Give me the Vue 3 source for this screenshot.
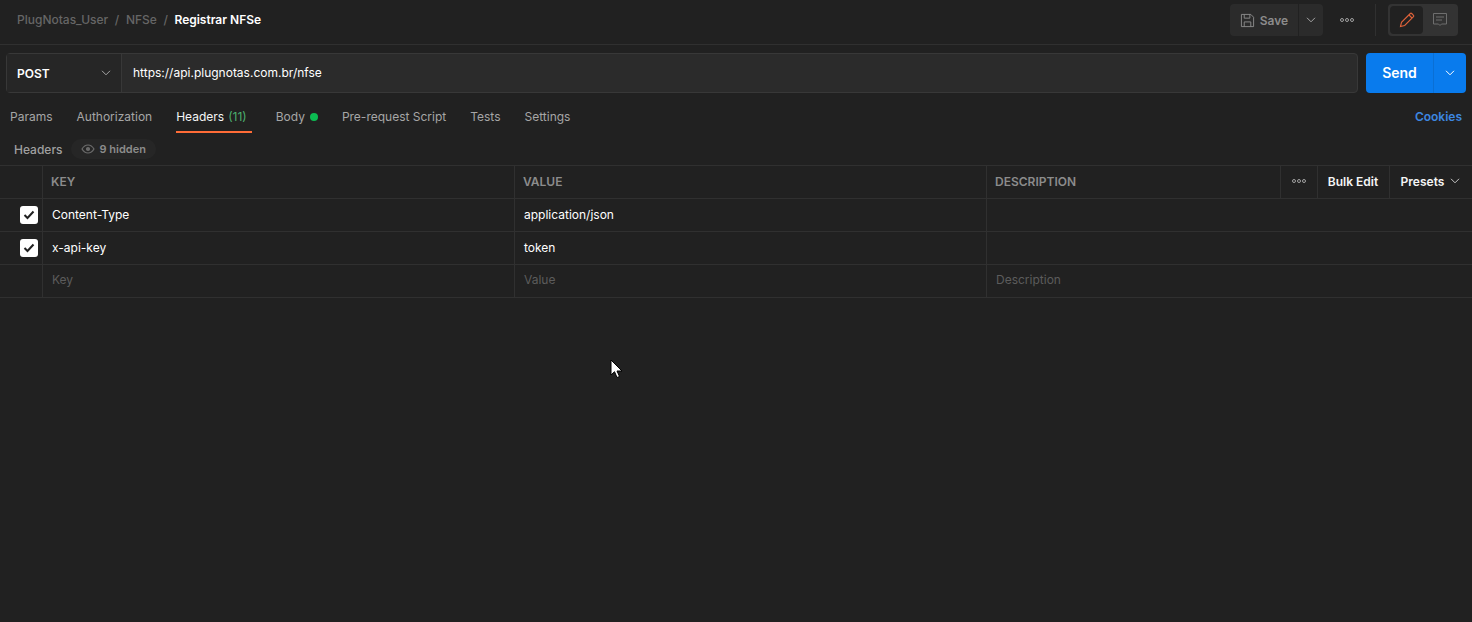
<template>
  <div class="page">
    <header class="topbar">
      <div class="crumbs">
        <span class="crumb">PlugNotas_User</span>
        <span class="slash">/</span>
        <span class="crumb">NFSe</span>
        <span class="slash">/</span>
        <span class="crumb-current">Registrar NFSe</span>
      </div>
      <div class="top-actions">
        <div class="save-group">
          <button class="save-btn">
            <svg width="15" height="15" viewBox="0 0 16 16" fill="none" stroke="#8c8c8c" stroke-width="1">
              <path d="M1.5 1.5h10l3 3v10h-13z" />
              <path d="M4.5 1.5v4h6v-4" />
              <path d="M4.5 14.5v-5h7v5" />
            </svg>
            <span>Save</span>
          </button>
          <button class="save-arrow">
            <svg width="10" height="6" viewBox="0 0 10 6" fill="none" stroke="#a6a6a6"><path d="M1 .8l4 4 4-4" /></svg>
          </button>
        </div>
        <div class="dots top-dots"><i></i><i></i><i></i></div>
        <div class="divider"></div>
        <div class="mode-toggle">
          <div class="mode active">
            <svg width="16" height="16" viewBox="0 0 16 16" fill="none" stroke="#e0633a" stroke-width="1.1">
              <path d="M1.500 14.500l1-4.200L11.300 1.500a1 1 0 0 1 1.400 0l1.800 1.800a1 1 0 0 1 0 1.400L5.700 13.500z" />
              <path d="M10 3l3 3" />
            </svg>
          </div>
          <div class="mode">
            <svg width="16" height="16" viewBox="0 0 16 16" fill="none" stroke="#6e6e6e" stroke-width="1">
              <path d="M1.500 1.500h13v10.500h-5l-1.500 1.500-1.500-1.500h-5z" />
              <path d="M4 5h8M4 8h6" />
            </svg>
          </div>
        </div>
      </div>
    </header>

    <section class="request-row">
      <div class="url-box">
        <div class="method">
          <span>POST</span>
          <svg width="10" height="6" viewBox="0 0 10 6" fill="none" stroke="#a6a6a6"><path d="M1 .8l4 4 4-4" /></svg>
        </div>
        <div class="url">https://api.plugnotas.com.br/nfse</div>
      </div>
      <div class="send">
        <span class="send-label">Send</span>
        <span class="send-arrow">
          <svg width="10" height="6" viewBox="0 0 10 6" fill="none" stroke="#fff"><path d="M1 .8l4 4 4-4" /></svg>
        </span>
      </div>
    </section>

    <nav class="tabs">
      <div class="tab-list">
        <div v-for="tab in tabs" :key="tab.name" class="tab" :class="{ current: tab.active }">
          {{ tab.name }}
          <span v-if="tab.count" class="count">({{ tab.count }})</span>
          <span v-if="tab.dot" class="dot"></span>
        </div>
      </div>
      <a class="cookies">Cookies</a>
    </nav>

    <div class="sub-head">
      <span class="sub-title">Headers</span>
      <span class="hidden-pill">
        <svg width="14" height="10" viewBox="0 0 14 10" fill="none" stroke="#6b6b6b" stroke-width="1.2">
          <path d="M1 5c1.500-2.500 3.500-4 6-4s4.500 1.500 6 4c-1.500 2.500-3.500 4-6 4s-4.500-1.500-6-4z" />
          <circle cx="7" cy="5" r="1.500" fill="#6b6b6b" />
        </svg>
        9 hidden
      </span>
    </div>

    <div class="table">
      <div class="row head">
        <div class="cell"></div>
        <div class="cell">KEY</div>
        <div class="cell">VALUE</div>
        <div class="cell">DESCRIPTION</div>
        <div class="cell tool"><div class="dots"><i></i><i></i><i></i></div></div>
        <div class="cell tool">Bulk Edit</div>
        <div class="cell tool presets">
          Presets
          <svg width="10" height="6" viewBox="0 0 10 6" fill="none" stroke="#c8c8c8"><path d="M1 .8l4 4 4-4" /></svg>
        </div>
      </div>
      <div v-for="item in headers" :key="item.key" class="row">
        <div class="cell check">
          <span class="box">
            <svg width="12" height="10" viewBox="0 0 12 10" fill="none" stroke="#212121" stroke-width="2"><path d="M1.500 5l3 3 6-6.500" /></svg>
          </span>
        </div>
        <div class="cell text">{{ item.key }}</div>
        <div class="cell text">{{ item.value }}</div>
        <div class="cell"></div>
      </div>
      <div class="row placeholder">
        <div class="cell"></div>
        <div class="cell">Key</div>
        <div class="cell">Value</div>
        <div class="cell">Description</div>
      </div>
    </div>

    <svg class="cursor" width="13" height="20" viewBox="0 0 13 20">
      <path d="M1 1v15l3.500-3.300 2.500 5.800 2.500-1-2.500-5.500h5z" fill="#fff" stroke="#000" stroke-width="1" />
    </svg>
  </div>
</template>

<script setup>
const tabs = [
  { name: 'Params' },
  { name: 'Authorization' },
  { name: 'Headers', count: 11, active: true },
  { name: 'Body', dot: true },
  { name: 'Pre-request Script' },
  { name: 'Tests' },
  { name: 'Settings' }
];

const headers = [
  { key: 'Content-Type', value: 'application/json' },
  { key: 'x-api-key', value: 'token' }
];
</script>

<style>
html, body {
  margin: 0;
  background: #212121;
}
</style>

<style scoped>
.page {
  position: relative;
  height: 622px;
  overflow: hidden;
  background: #212121;
  font-family: Inter, "Liberation Sans", sans-serif;
  font-size: 12px;
  color: #a6a6a6;
}
button {
  border: none;
  padding: 0;
  font: inherit;
  color: inherit;
}
.topbar {
  height: 45px;
  box-sizing: border-box;
  border-bottom: 1px solid #303030;
  display: flex;
  align-items: center;
  justify-content: space-between;
  padding: 0 14px 4px 17px;
}
.crumbs {
  display: flex;
  gap: 6.6px;
  margin-bottom: 2px;
  font-weight: 500;
}
.crumb, .slash {
  color: #666;
}
.crumb-current {
  color: #fff;
  font-weight: 600;
}
.top-actions {
  display: flex;
  align-items: center;
}
.save-group {
  display: flex;
  gap: 1px;
}
.save-btn {
  width: 68px;
  height: 32px;
  background: #2b2b2b;
  border-radius: 4px 0 0 4px;
  display: flex;
  align-items: center;
  justify-content: center;
  gap: 5px;
  font-weight: 600;
  color: #8c8c8c;
}
.save-arrow {
  width: 24px;
  height: 32px;
  background: #2b2b2b;
  border-radius: 0 4px 4px 0;
  display: flex;
  align-items: center;
  justify-content: center;
}
.dots {
  display: flex;
  gap: 1px;
}
.dots i {
  width: 2px;
  height: 2px;
  border: 1px solid #a0a0a0;
  border-radius: 50%;
}
.top-dots {
  margin-left: 17px;
}
.divider {
  width: 1px;
  height: 32px;
  background: #303030;
  margin: 0 12px 0 21px;
}
.mode-toggle {
  width: 70px;
  height: 32px;
  box-sizing: border-box;
  padding: 2px;
  background: #333;
  border-radius: 4px;
  display: flex;
}
.mode {
  flex: 1;
  display: flex;
  align-items: center;
  justify-content: center;
  border-radius: 4px;
}
.mode.active {
  background: #212121;
}
.request-row {
  display: flex;
  gap: 8px;
  padding: 8px 6px 0;
}
.url-box {
  flex: 1;
  height: 40px;
  box-sizing: border-box;
  display: flex;
  background: #2b2b2b;
  border: 1px solid #383838;
  border-radius: 4px;
}
.method {
  width: 115px;
  box-sizing: border-box;
  padding: 0 10px;
  display: flex;
  align-items: center;
  justify-content: space-between;
  background: #262626;
  border-right: 1px solid #383838;
  font-weight: 600;
  color: #fff;
}
.url {
  padding-left: 11px;
  line-height: 38px;
  color: #fff;
}
.send {
  width: 100px;
  height: 40px;
  display: flex;
  background: #097bed;
  border-radius: 4px;
  color: #fff;
}
.send-label {
  flex: 1;
  text-align: center;
  line-height: 40px;
  font-size: 14px;
  font-weight: 600;
}
.send-arrow {
  width: 32px;
  border-left: 1px solid #0a6fd4;
  display: flex;
  align-items: center;
  justify-content: center;
}
.tabs {
  height: 40px;
  display: flex;
  justify-content: space-between;
  padding: 0 10px;
}
.tab-list {
  display: flex;
  gap: 24px;
}
.tab {
  height: 40px;
  box-sizing: border-box;
  padding-top: 7px;
  display: flex;
  align-items: center;
  gap: 4px;
  color: #a6a6a6;
}
.tab.current {
  color: #f5f5f5;
  border-bottom: 2px solid #ff6c37;
  padding: 9px 5px 0 0;
}
.count {
  color: #4caf6e;
}
.dot {
  width: 8px;
  height: 8px;
  border-radius: 50%;
  background: #0cbb52;
  margin-left: 1px;
}
.cookies {
  line-height: 48px;
  color: #3d87e0;
  font-weight: 600;
}
.sub-head {
  height: 32px;
  display: flex;
  align-items: center;
  gap: 8px;
  padding-left: 14px;
}
.sub-title {
  font-weight: 500;
  color: #a0a0a0;
}
.hidden-pill {
  display: flex;
  align-items: center;
  gap: 5px;
  height: 20px;
  padding: 0 10px;
  border-radius: 10px;
  background: #262626;
  font-size: 11px;
  font-weight: 600;
  color: #8c8c8c;
}
.table {
  border-top: 1px solid #303030;
}
.row {
  display: grid;
  grid-template-columns: 43px 472px 472px 1fr;
  height: 33px;
  box-sizing: border-box;
  border-bottom: 1px solid #303030;
}
.row.head {
  grid-template-columns: 43px 472px 472px 294px 37px 72px 1fr;
}
.cell {
  display: flex;
  align-items: center;
  padding: 0 0 1px 9px;
  border-right: 1px solid #303030;
}
.cell:last-child {
  border-right: none;
}
.head .cell {
  padding-left: 8px;
  font-weight: 600;
  color: #8c8c8c;
}
.check {
  padding-left: 20px;
}
.box {
  width: 18px;
  height: 18px;
  border-radius: 3px;
  background: #fff;
  display: flex;
  align-items: center;
  justify-content: center;
}
.text {
  color: #fff;
}
.placeholder .cell {
  padding-bottom: 3px;
  color: #5c5c5c;
}
.head .tool {
  padding: 0 1px 2px 0;
  justify-content: center;
  color: #f5f5f5;
}
.head .presets {
  gap: 6px;
}
.cursor {
  position: absolute;
  left: 610px;
  top: 359px;
}
</style>
